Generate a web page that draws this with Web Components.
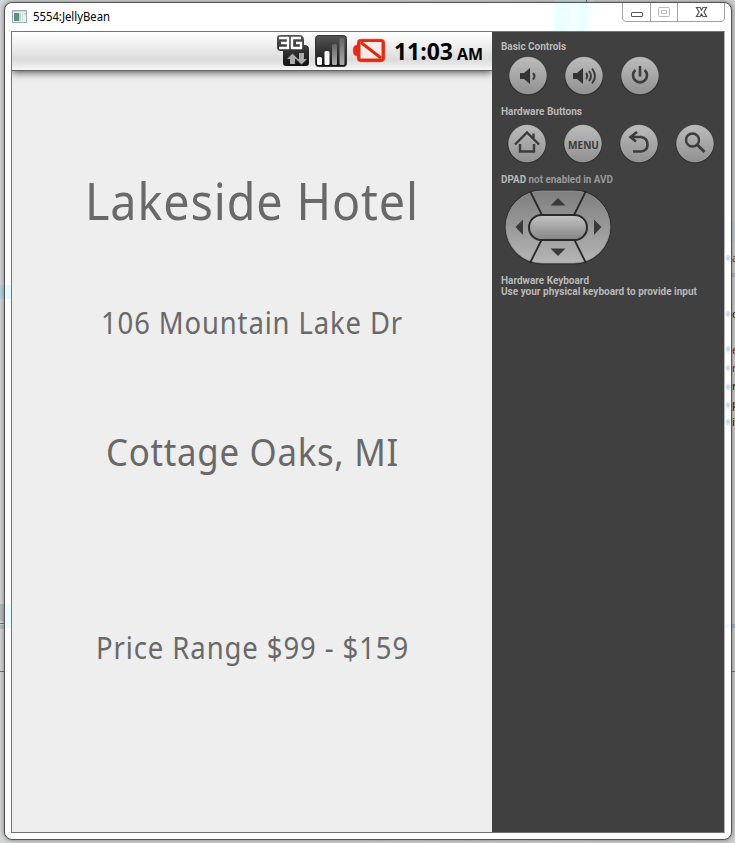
<!DOCTYPE html>
<html lang="en"><head><meta charset="utf-8"><title>5554:JellyBean</title>
<style>html,body{margin:0;height:843px;overflow:hidden;background:#d2d4d5}</style></head>
<body><emulator-desktop></emulator-desktop>
<script>
const define=(name,html,after)=>customElements.define(name,class extends HTMLElement{
  connectedCallback(){const r=this.attachShadow({mode:'open'});r.innerHTML=typeof html==='function'?html(this):html;if(after)after(this,r);}
});

/* A line of text condensed or widened to the width in its "w" attribute. */
define('fit-text',`<style>:host{display:block;white-space:nowrap}span{display:inline-block;transform-origin:0 50%}</style><span><slot></slot></span>`,(el,r)=>{
  const s=r.querySelector('span'),w=+el.getAttribute('w');
  el.style.width=w+'px';
  s.style.transform=`scaleX(${w/s.getBoundingClientRect().width})`;
});

define('window-buttons',`<style>:host{display:block;width:103px;height:20px}svg{display:block}</style>
<svg width="103" height="20" fill="none">
<path d="M.5 0V15Q.5 18.500 5 18.500H98Q102.500 18.500 102.500 15V0M28.500 0V18M55.500 0V18" stroke="#a2a2a2"/>
<rect x="9.500" y="9.500" width="11" height="4" rx=".5" fill="#fff" stroke="#54565c"/>
<rect x="36.500" y="4.500" width="11" height="9" rx="1" stroke="#bbb"/><rect x="39.500" y="7.500" width="5" height="3" stroke="#bbb"/>
<path d="M74.500 4.500H78L79.500 7 81 4.500H84.500L82 9 84.500 13.500H81L79.500 11 78 13.500H74.500L77 9Z" stroke="#54565c" stroke-width="1.200"/>
</svg>`);

define('title-bar',`<style>:host{display:flex;height:28px;padding:0 0 0 7px;box-sizing:border-box;font:12px "Noto Sans","Open Sans",sans-serif;color:#000;justify-content:space-between;background:linear-gradient(90deg,transparent 546px,#eaffff 552px,#f2ffff 570px,#e8ffff 580px,transparent 588px)}
.l{display:flex;gap:6px;padding-top:5px;line-height:17px}svg{margin-top:2px}window-buttons{margin-right:6px}</style>
<div class="l"><svg width="15" height="14"><rect x=".5" y=".5" width="14" height="12" fill="#eef1f1" stroke="#9caeb5"/><path d="M1 1.500H14" stroke="#c2d5e0"/><rect x="2" y="3" width="5" height="8" fill="#5c9184"/><rect x="7" y="3" width="2" height="8" fill="#bdd6cf"/><path d="M10.500 3V11" stroke="#d5d5d5"/><path d="M12 3h2v3z" fill="#a8d0c0"/></svg><fit-text w="77">5554:JellyBean</fit-text></div><window-buttons></window-buttons>`);

define('status-bar',`<style>:host{display:flex;height:39px;box-sizing:border-box;padding:3px 9px 0 0;justify-content:flex-end;background:linear-gradient(#fff,#f1f1f1 30%,#dcdcdc 72%,#e6e6e6 85%,#f8f8f8);border-bottom:1px solid #626262;color:#000;font:bold 22.500px/34px "Open Sans","Noto Sans",sans-serif;box-shadow:0 2px 7px #0009;clip-path:inset(0 0 -12px 0)}
.ampm{font-size:16px;margin-left:4px;line-height:38px}svg{display:block}.clock{margin-left:7px;display:flex}</style>
<svg width="110" height="33" fill="none">
<defs><linearGradient id="k" x2="0" y2="1"><stop stop-color="#555"/><stop offset="1" stop-color="#111"/></linearGradient><linearGradient id="w" x2="0" y2="1"><stop stop-color="#666"/><stop offset="1" stop-color="#aaa"/></linearGradient></defs>
<path d="M3 0H22Q27 0 27 5V10H29Q32 11 32 14V28Q32 31 29 31H9Q6 31 6 28V16H3Q0 15 0 12V3Q0 0 3 0Z" fill="url(#k)"/>
<path d="M2 3H11V13H2M4 8H11M24 3H15V13H24V8H19" stroke="#fff" stroke-width="2.400"/>
<path d="M14.500 18.500L20 24H17V29H12V24H9ZM21 18H26V24H29L23.500 29.500 18 24H21Z" transform="translate(1)" fill="#aaa"/>
<rect x="38.500" y=".5" width="31" height="31" rx="3" fill="url(#k)" stroke="#333"/>
<rect x="40" y="22" width="5" height="8" rx="1.500" fill="#fff"/><rect x="47.500" y="16" width="5" height="14" rx="1.500" fill="#fff"/><rect x="55" y="9" width="5" height="21" rx="1.500" fill="url(#w)"/><rect x="62.500" y="3" width="5" height="27" rx="1.500" fill="url(#w)"/>
<path d="M84 4H104Q108 4 108 8V23Q108 27 104 27H84Q80 27 80 23V21Q76 21 76 15.500T80 10V8Q80 4 84 4Z" fill="#e02c15" stroke="#ff6a55" stroke-opacity=".45"/>
<rect x="83.500" y="7" width="21" height="16.500" fill="#f5ece9"/><path d="M84 7.500L104 23" stroke="#dc2811" stroke-width="3"/>
</svg><div class="clock"><fit-text w="59">11:03</fit-text><fit-text class="ampm" w="26">AM</fit-text></div>`);

define('hotel-screen',`<style>:host{display:flex;flex-direction:column;width:480px;height:800px;background:#eee;color:#696969;font-family:"Noto Sans","Open Sans",sans-serif}
main{display:flex;flex-direction:column;align-items:center;padding-top:94px}
.name{font-size:51.500px;line-height:70px;letter-spacing:1px}.street{font-size:30.500px;line-height:40px;margin-top:67px;letter-spacing:1px}.city{font-size:38.500px;line-height:50px;margin-top:84px;letter-spacing:.8px}.price{font-size:30.500px;line-height:40px;margin-top:151px;letter-spacing:1px}</style>
<status-bar></status-bar><main><fit-text class="name" w="334">Lakeside Hotel</fit-text><fit-text class="street" w="302">106 Mountain Lake Dr</fit-text><fit-text class="city" w="293">Cottage Oaks, MI</fit-text><fit-text class="price" w="313">Price Range $99 - $159</fit-text></main>`);

const glyphs={
 down:'<path d="M12 17H16L22 12V28L16 23H12Z" fill="#333" stroke="none"/><path d="M25 17Q28 20 25 23.500" stroke-width="2"/>',
 up:'<path d="M9 17H13L19 12V28L13 23H9Z" fill="#333" stroke="none"/><path d="M22 17Q24.500 20 22 23M25 15Q29 20 25 25M28 12.500Q34 20 28 27.500" stroke-width="2"/>',
 power:'<path d="M20 10V20.500M15.500 14A7 7 0 1 0 24.500 14" stroke-width="2.600"/>',
 home:'<path d="M8 20.500L20 8.500 32 20.500M26.500 14V9.500M13 20V27.500H27V20" stroke-width="2.400"/>',
 back:'<path d="M18 8L11.500 13 17 17.500M12 13H22Q28.500 14 28.500 20.500T22 27.500H14" stroke-width="2.600"/>',
 search:'<circle cx="17.500" cy="16" r="6.500" stroke-width="2.400"/><path d="M22 20.500L29.500 28" stroke-width="3"/>',
 menu:''};
define('round-key',el=>`<style>:host{display:grid;width:40px;height:40px;font:bold 11px "Open Sans",Roboto,sans-serif;color:#3b3b3b;place-items:center}svg,fit-text{grid-area:1/1}</style>
<svg width="40" height="40" fill="none" stroke="#3c3c3c"><defs><linearGradient id="g" x2="0" y2="1"><stop stop-color="#bcbcbc"/><stop offset="1" stop-color="#919191"/></linearGradient></defs><circle cx="20" cy="20" r="19.600" fill="#303030" stroke="none"/><circle cx="20" cy="19.500" r="18.400" fill="url(#g)" stroke="#bdbdbd" stroke-width=".5"/>${glyphs[el.getAttribute('icon')]}</svg>
${el.getAttribute('icon')==='menu'?'<fit-text w="31">MENU</fit-text>':''}`);

define('dpad-control',`<style>:host{display:block;width:108px;height:76px}svg{display:block}</style><svg width="108" height="76">
<defs><linearGradient id="g" x2="0" y2="1"><stop stop-color="#7e7e7e"/><stop offset="1" stop-color="#b5b5b5"/></linearGradient><linearGradient id="c" x2="0" y2="1"><stop stop-color="#c4c4c4"/><stop offset="1" stop-color="#858585"/></linearGradient></defs>
<rect x=".5" y=".5" width="107" height="75" rx="37.500" fill="#303030"/><rect x="2" y="2" width="104" height="72" rx="36" fill="url(#g)" stroke="#a2a2a2" stroke-width=".7"/>
<path d="M26 2L38 26M82 2L70 26M26 74L38 50M82 74L70 50" stroke="#292929" stroke-width="1.800"/>
<rect x="25" y="26" width="58" height="25" rx="12.500" fill="url(#c)" stroke="#292929" stroke-width="2"/>
<g fill="#3a3a3a"><path d="M46.500 16.500L54 9 61.500 16.500ZM46.500 59.500L54 67 61.500 59.500ZM19 30.500V46L11.500 38ZM90 30.500V46L97.500 38Z"/></g></svg>`);

define('control-panel',`<style>:host{display:flex;flex-direction:column;width:232px;height:800px;box-sizing:border-box;padding:9px 0 0 9px;background:#404040;color:#b9b9b9;font:bold 10px/11px Roboto,sans-serif}
.row{display:flex;gap:16px}.basic{padding:4px 0 0 7px}.hard{padding:7px 0 0 6px}i{font-style:normal;color:#999}.h2{margin-top:10px}.h3{margin-top:10px}dpad-control{margin:4px 0 0 3px}.h4{margin-top:10px}</style>
<fit-text w="65">Basic Controls</fit-text><div class="row basic"><round-key icon="down"></round-key><round-key icon="up"></round-key><round-key icon="power"></round-key></div>
<fit-text class="h2" w="81">Hardware Buttons</fit-text><div class="row hard"><round-key icon="home"></round-key><round-key icon="menu"></round-key><round-key icon="back"></round-key><round-key icon="search"></round-key></div>
<fit-text class="h3" w="112">DPAD <i>not enabled in AVD</i></fit-text><dpad-control></dpad-control>
<fit-text class="h4" w="88">Hardware Keyboard</fit-text><fit-text w="196">Use your physical keyboard to provide input</fit-text>`);

define('emulator-window',`<style>:host{display:block;box-sizing:border-box;width:728px;height:838px;border:1px solid #555;border-radius:8px;background:#fff;box-shadow:0 0 5px #0007;overflow:hidden}
.client{display:flex;box-sizing:border-box;margin-left:6px;width:714px;height:802px;border:1px solid #747474;border-right-color:#b5b5b5}</style>
<title-bar></title-bar><div class="client"><hotel-screen></hotel-screen><control-panel></control-panel></div>`);

/* Slivers of the windows behind, visible at the screen edges. */
define('background-slivers',`<style>:host{position:absolute;inset:0}b{position:absolute}</style>
<b style="left:555px;top:0;width:38px;height:3px;background:#c5e4e7"></b><b style="left:586px;top:0;width:1px;height:3px;background:#667"></b>
<b style="left:0;top:285px;width:5px;height:14px;background:#b9d3e3"></b><b style="left:0;top:604px;width:5px;height:17px;background:#bbb"></b><b style="left:0;top:623px;width:5px;height:1px;background:#777"></b><b style="left:0;top:625px;width:5px;height:4px;background:#b9bdd2"></b><b style="left:0;top:671px;width:5px;height:1px;background:#777"></b>
<b style="left:731px;top:222px;width:4px;height:20px;background:#bdcfd3"></b><b style="left:731px;top:273px;width:4px;height:4px;background:#b5b7ca"></b><b style="left:731px;top:624px;width:4px;height:4px;background:#b0b2ce"></b><b style="left:731px;top:671px;width:4px;height:1px;background:#777"></b>`);
define('glass-reflections',`<style>:host{position:absolute;inset:0;pointer-events:none;font:11px/14px "Noto Sans",sans-serif}b,span{position:absolute}.g{left:725px;width:6px;height:8px;background:radial-gradient(#a8cdef,transparent 75%)}span{left:732px;width:3px;overflow:hidden;color:#111}.r{color:#812}</style>
${[254,310,345,364,383,401,418].map(y=>`<b class="g" style="top:${y}px"></b>`).join('')}
<b style="left:5px;top:285px;width:6px;height:14px;background:#e8faff"></b><b style="left:5px;top:604px;width:6px;height:24px;background:#e9ffff"></b><b style="left:725px;top:624px;width:6px;height:4px;background:#eafcff"></b>
<span class="r" style="top:251px">a</span><span style="top:307px">o</span><span class="r" style="top:343px">e</span><span class="r" style="top:361px">r</span><span style="top:379px">r</span><span style="top:397px">p</span><span style="top:415px">it</span>`);
define('emulator-desktop',`<style>:host{display:block;position:relative;width:735px;height:843px;box-sizing:border-box;padding:2px 3px 3px 4px;background:linear-gradient(90deg,#d4d6d8,#d4d6d8 50%,#cfcfcf)}emulator-window{position:relative}</style>
<background-slivers></background-slivers><emulator-window></emulator-window><glass-reflections></glass-reflections>`);
</script></body></html>
